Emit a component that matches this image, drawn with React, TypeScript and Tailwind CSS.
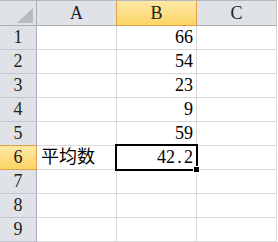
import React from "react";

const rows: { n: number; a?: string; b?: string }[] = [
  { n: 1, b: "66" },
  { n: 2, b: "54" },
  { n: 3, b: "23" },
  { n: 4, b: "9" },
  { n: 5, b: "59" },
  { n: 6, a: "平均数", b: "42.2" },
  { n: 7 },
  { n: 8 },
  { n: 9 },
];

export default function App() {
  return (
    <div
      className="relative w-[278px] h-[242px] bg-white overflow-hidden text-[18px] leading-[18px] text-black"
      style={{ fontFamily: '"Liberation Serif", "Noto Sans CJK SC", serif' }}
    >
      <div className="grid grid-cols-[37px_80px_80px_80px] grid-rows-[26px_repeat(9,24px)]">
        {/* corner */}
        <div className="relative bg-[#dfe3e8] border-t border-t-[#b4b9bf] border-r border-r-[#a9aeb5] border-b border-b-[#a9aeb5]">
          <svg className="absolute left-[17px] top-[7px]" width="16" height="15" viewBox="0 0 16 15">
            <polygon points="16,0 16,15 0,15" fill="#b6bbc2" />
          </svg>
        </div>
        {/* A */}
        <div className="flex items-end justify-center pb-[3px] bg-[#dfe3e8] border-t border-t-[#b4b9bf] border-r border-r-[#e2a04a] border-b border-b-[#a9aeb5] text-[#222]">
          A
        </div>
        {/* B highlighted */}
        <div className="flex items-end justify-center pb-[3px] bg-gradient-to-b from-[#fde9a6] to-[#fbd462] border-t border-t-[#b4b9bf] border-r border-r-[#e2a04a] border-b border-b-[#e2a04a] text-[#222]">
          B
        </div>
        {/* C */}
        <div className="flex items-end justify-center pb-[3px] bg-[#dfe3e8] border-t border-t-[#b4b9bf] border-r border-r-[#c5c9ce] border-b border-b-[#a9aeb5] text-[#222]">
          C
        </div>

        {rows.map((r) => {
          const sel = r.n === 6;
          const beforeSel = r.n === 5;
          return (
            <React.Fragment key={r.n}>
              <div
                className={
                  sel
                    ? "flex items-end justify-center pb-[3px] bg-gradient-to-b from-[#fde9a6] to-[#fbd462] border-r border-r-[#e2a04a] border-b border-b-[#e2a04a] text-[#222]"
                    : beforeSel
                    ? "flex items-end justify-center pb-[3px] bg-[#dfe3e8] border-r border-r-[#a9aeb5] border-b border-b-[#e2a04a] text-[#222]"
                    : "flex items-end justify-center pb-[3px] bg-[#dfe3e8] border-r border-r-[#a9aeb5] border-b border-b-[#c3c7cd] text-[#222]"
                }
              >
                {r.n}
              </div>
              <div className="flex items-end justify-start pl-[4px] pb-[3px] border-r border-b border-[#d9d9d9] whitespace-nowrap">
                {r.a ?? ""}
              </div>
              <div className="flex items-end justify-end pr-[3px] pb-[3px] border-r border-b border-[#d9d9d9] whitespace-nowrap">
                {r.b === "42.2" ? (
                  <span>
                    42<span className="inline-block w-[9px] text-center">.</span>2
                  </span>
                ) : (
                  r.b ?? ""
                )}
              </div>
              <div className="border-r border-b border-[#d9d9d9]" />
            </React.Fragment>
          );
        })}
      </div>

      {/* selection */}
      <div className="absolute left-[115px] top-[144px] w-[83px] h-[27px] border-2 border-black" />
      <div className="absolute left-[193px] top-[166px] w-[7px] h-[7px] bg-white" />
      <div className="absolute left-[194px] top-[167px] w-[5px] h-[5px] bg-black" />
    </div>
  );
}
